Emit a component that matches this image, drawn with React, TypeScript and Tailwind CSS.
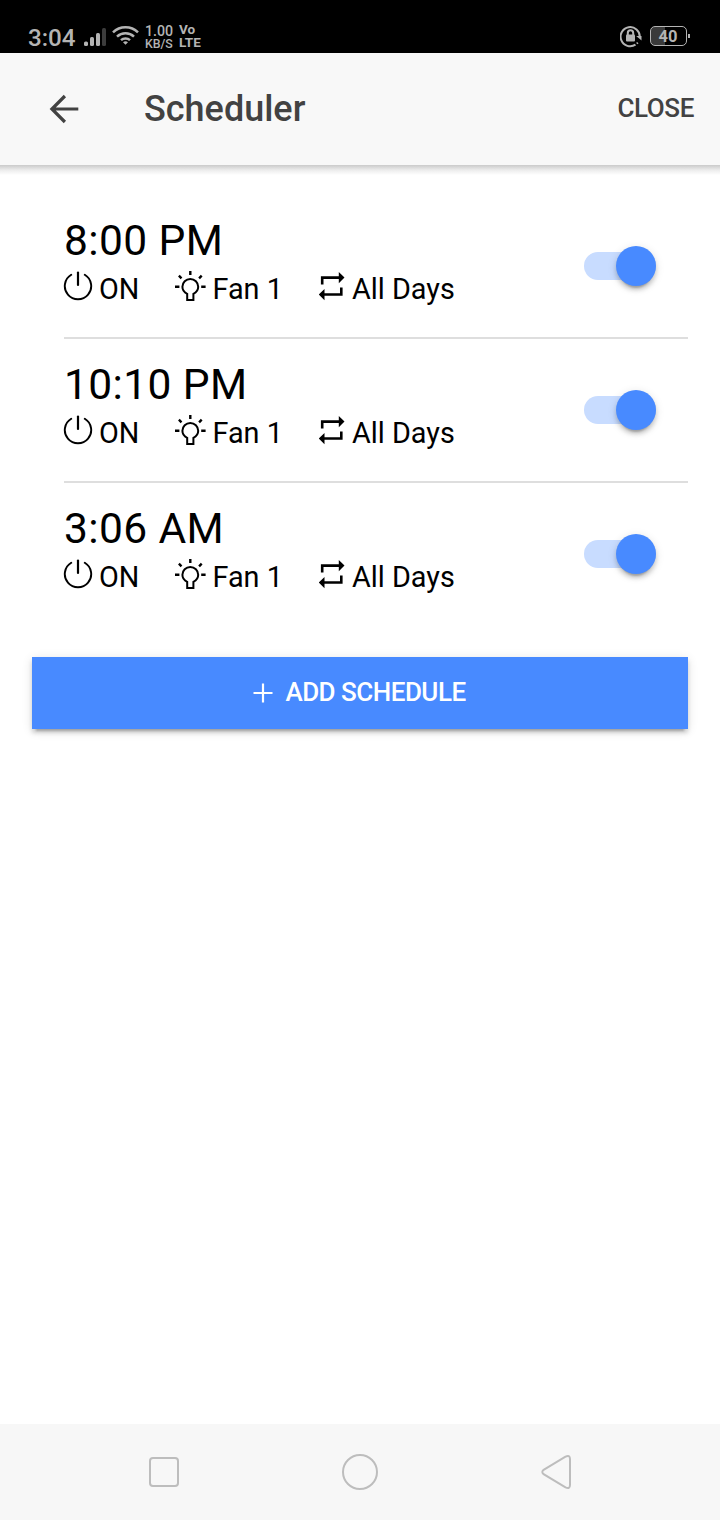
import type { ReactNode } from "react";

const schedules = [
  { time: "8:00 PM", state: "ON", device: "Fan 1", repeat: "All Days" },
  { time: "10:10 PM", state: "ON", device: "Fan 1", repeat: "All Days" },
  { time: "3:06 AM", state: "ON", device: "Fan 1", repeat: "All Days" },
];

function StatusBar() {
  return (
    <div className="flex h-[53px] items-start bg-black text-[#b4b4b4]">
      <span className="ml-7 mt-[23px] w-14 text-[24.2px] leading-[30px] font-medium">3:04</span>
      <svg className="mt-7 h-[18px] w-[22px]" viewBox="0 0 22 18" fill="currentColor">
        <rect x="0" y="13.5" width="4" height="4.5" rx="1.5" />
        <rect x="6" y="9" width="4" height="9" rx="1.5" />
        <rect x="12" y="5" width="4" height="13" rx="1.5" />
        <rect x="18" y="0" width="4" height="18" rx="1.5" fill="#3c3c3c" />
      </svg>
      <svg className="ml-1.5 mt-[25px] h-5 w-[27px]" viewBox="0 0 27 20" fill="none" stroke="currentColor" strokeWidth="2.5">
        <path d="M1 7.3a18 18 0 0 1 25 0" />
        <path d="M5 11.6a12.3 12.3 0 0 1 17 0" />
        <path d="M9 15.2a6.6 6.6 0 0 1 9 0" />
        <path d="M11 17.2q2.5-1.8 5 0L13.5 19.8z" fill="currentColor" stroke="none" />
      </svg>
      <div className="ml-1.5 mt-[25px] w-[34px] text-[12.3px] font-medium leading-3">
        <p className="text-[14.2px] leading-[13px]">1.00</p>
        <p className="whitespace-nowrap">KB/S</p>
      </div>
      <div className="mt-[23px] text-[13.5px] font-bold leading-[13px]">
        <p>Vo</p>
        <p>LTE</p>
      </div>
      <svg className="ml-auto mt-[25px] h-[23px] w-[23px]" viewBox="0 0 23 23" fill="none" stroke="currentColor" strokeWidth="2">
        <path d="M15.5 19.7A9.6 9.6 0 1 1 19.8 12M17.8 17.6l-1 1" />
        <path d="M16.200 11H21.500V15.500z" fill="currentColor" stroke="none" />
        <rect x="6" y="9.5" width="9" height="7" rx="1" fill="currentColor" stroke="none" />
        <path d="M7.8 10V8a2.7 2.7 0 0 1 5.4 0v2" />
      </svg>
      <div className="ml-[7px] mt-[26px] flex h-5 w-[37px] items-center justify-center rounded-[5px] border border-[#b4b4b4] bg-linear-to-r from-[#3a3a3a] from-40% to-black to-40% text-[16.5px] font-bold leading-none">
        <span className="mr-px mt-0.5">40</span>
      </div>
      <span className="ml-px mr-[30px] mt-[34px] h-1 w-0.5 bg-[#b4b4b4]" />
    </div>
  );
}

function PowerIcon() {
  return (
    <svg className="mt-0.5 h-[30px] w-[30px]" viewBox="0 0 30 30" fill="none" stroke="currentColor" strokeLinecap="round">
      <path d="M8.2 3.800a13.200 13.200 0 1 0 13.600 0" strokeWidth="1.9" />
      <path d="M15 1.500v12.500" strokeWidth="2.200" />
    </svg>
  );
}

function BulbIcon() {
  return (
    <svg className="mt-px h-[32px] w-[32px]" viewBox="0 0 32 32" fill="none" stroke="currentColor" strokeWidth="2">
      <path d="M13.2 30v-6.200c-2.900-1.300-4.800-3.700-4.800-7a7.900 7.900 0 0 1 15.800 0c0 3.300-1.900 5.700-4.800 7V30z" />
      <path d="M16.300 1v4M1 16.800h4.400M27.200 16.800h4.400M4.900 5.700l2.600 2.600M27.700 5.700l-2.600 2.600" strokeWidth="2.4" />
    </svg>
  );
}

function RepeatIcon() {
  return (
    <svg className="mt-0.5 h-[30px] w-[27px]" viewBox="0 0 27 30" fill="none" stroke="currentColor" strokeWidth="2.6">
      <path d="M3.200 13.500V6.600h17M22.300 16.500v7H5" />
      <path d="M19.800 1L25.500 6.600l-5.700 5.700zM5.500 17.900L-.2 23.500l5.700 5.700z" fill="currentColor" stroke="none" />
    </svg>
  );
}

function Detail({ icon, children, className }: { icon: ReactNode; children: string; className: string }) {
  return (
    <div className={`flex ${className}`}>
      {icon}
      <span className="whitespace-nowrap">{children}</span>
    </div>
  );
}

function Toggle() {
  return (
    <button className="mr-8 flex h-7 w-[72px] items-center justify-end rounded-full bg-[#c8dcff]" aria-label="Toggle schedule">
      <span className="h-10 w-10 shrink-0 rounded-full bg-[#488aff] shadow-[0_4px_4px_rgba(0,0,0,0.16),0_6px_2px_-4px_rgba(0,0,0,0.2),0_2px_10px_rgba(0,0,0,0.12)]" />
    </button>
  );
}

export default function App() {
  return (
    <div className="flex h-[1520px] w-[720px] flex-col bg-white font-['Roboto',sans-serif]">
      <StatusBar />
      <header className="flex h-28 items-center bg-[#f8f8f8] pl-12 pr-[26px] text-[#424242]">
        <svg className="h-8 w-8" viewBox="0 0 32 32" fill="none" stroke="currentColor" strokeWidth="3.2">
          <path d="M30.300 16H4M16.900 3L3.900 16l13 13" />
        </svg>
        <h1 className="ml-16 text-[36px] font-medium leading-none">Scheduler</h1>
        <button className="-mt-0.5 ml-auto text-[26px] font-medium leading-none tracking-[-0.4px]">CLOSE</button>
      </header>
      <div className="h-2.5 bg-linear-to-b from-[#cbcbcb] via-[#ececec] via-50% to-white" />

      <main className="flex-1 pt-5">
        {schedules.map((item, i) => (
          <div
            key={item.time}
            className={`ml-16 mr-8 flex h-36 items-center border-b-2 ${i < schedules.length - 1 ? "border-[#dedede]" : "border-transparent"}`}
          >
            <div className="flex-1 self-start pt-[21px] text-black">
              <p className="text-[42.5px] leading-[50px] tracking-[0.4px]">{item.time}</p>
              <div className="mt-[3px] flex text-[28.8px] leading-10">
                <Detail icon={<PowerIcon />} className="-ml-px w-[111px] gap-1.5">{item.state}</Detail>
                <Detail icon={<BulbIcon />} className="w-[145px] gap-[6.500px]">{item.device}</Detail>
                <Detail icon={<RepeatIcon />} className="gap-1.5">{item.repeat}</Detail>
              </div>
            </div>
            <Toggle />
          </div>
        ))}

        <button className="mx-8 mt-[30px] flex h-[72px] w-[656px] items-center justify-center bg-[#488aff] text-[26px] font-medium text-white shadow-[0_4px_4px_rgba(0,0,0,0.14),0_6px_2px_-4px_rgba(0,0,0,0.2),0_2px_10px_rgba(0,0,0,0.12)]">
          <svg className="mr-3 h-5 w-5" viewBox="0 0 20 20" fill="none" stroke="currentColor" strokeWidth="2.2">
            <path d="M10 .5v19M.5 10h19" />
          </svg>
          <span className="-mt-0.5 mr-px tracking-[-0.5px]">ADD SCHEDULE</span>
        </button>
      </main>

      <nav className="flex h-24 items-center bg-[#f7f7f7] text-[#bdbdbd]">
        <span className="ml-[149px] h-[30px] w-[30px] rounded-[4px] border-2 border-current" />
        <span className="ml-[163px] h-9 w-9 rounded-full border-2 border-current" />
        <svg className="ml-[162px] h-9 w-8" viewBox="0 0 32 36" fill="none" stroke="currentColor" strokeWidth="2">
          <path d="M3.600 15.800L25.500 2.600Q30 .5 30 5V31Q30 35.500 25.500 33.400L3.600 20.200Q1 18 3.600 15.800Z" />
        </svg>
      </nav>
    </div>
  );
}
